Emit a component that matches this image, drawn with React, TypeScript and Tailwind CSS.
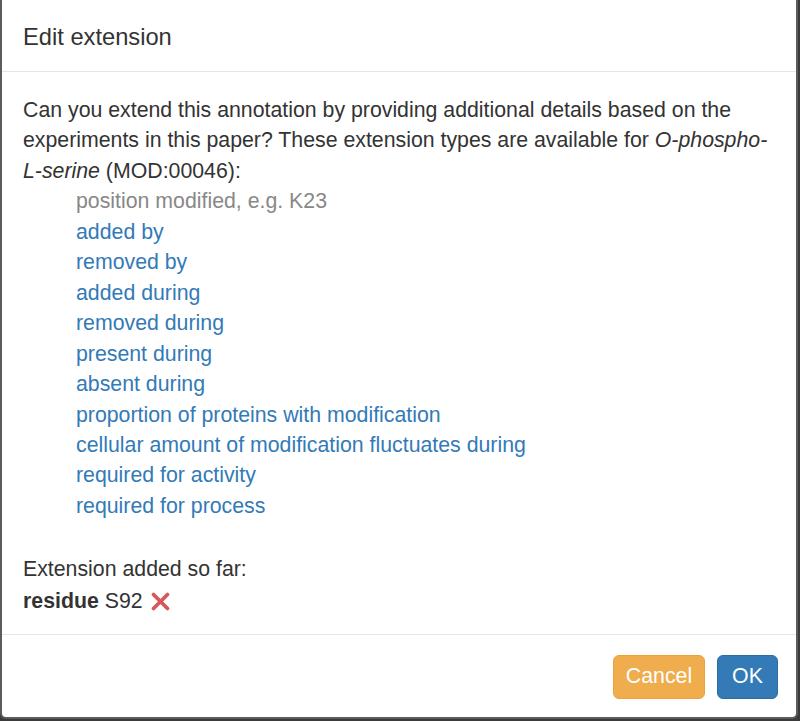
import React from "react";

const items = [
  "added by",
  "removed by",
  "added during",
  "removed during",
  "present during",
  "absent during",
  "proportion of proteins with modification",
  "cellular amount of modification fluctuates during",
  "required for activity",
  "required for process",
];

export default function App() {
  return (
    <div
      className="w-[800px] h-[721px] bg-[#3b3b3b] overflow-hidden"
      style={{ fontFamily: '"Liberation Sans", Arial, Helvetica, sans-serif' }}
    >
      <div className="w-[798px] bg-white border-l-2 border-r-2 border-b-2 border-[#5c5c5c] rounded-b-[6px] text-[#333333]">
        <div className="h-[72px] border-b border-[#e5e5e5] px-[21px] pt-[24px]">
          <h4 className="text-[23.7px] leading-[26px] m-0 font-normal">Edit extension</h4>
        </div>
        <div className="px-[21px] pt-[23px] pb-[17px] text-[21.3px] leading-[30.46px]">
          <div>
            Can you extend this annotation by providing additional details based on the
            <br />
            experiments in this paper? These extension types are available for{" "}
            <i>O-phospho-</i>
            <br />
            <i>L-serine</i> (MOD:00046):
          </div>
          <div className="pl-[53px]">
            <div className="text-[#888888]">position modified, e.g. K23</div>
            {items.map((t) => (
              <div key={t} className="text-[#337ab7]">
                {t}
              </div>
            ))}
          </div>
          <div className="mt-[33px]">Extension added so far:</div>
          <div className="flex items-center h-[32px]">
            <b className="font-bold">residue</b>
            <span className="ml-[6px]">S92</span>
            <svg className="ml-[7px] mt-[2px]" width="21" height="21" viewBox="0 0 21 21">
              <path
                d="M3.5 3.5 L17.5 17.5 M17.5 3.5 L3.5 17.5"
                stroke="#d5585a"
                strokeWidth="3.8"
                strokeLinecap="round"
              />
            </svg>
          </div>
        </div>
        <div className="border-t border-[#e5e5e5] flex justify-end gap-[12px] pt-[20px] pb-[18px] pr-[18px]">
          <button className="h-[44px] w-[92px] rounded-[6px] bg-[#f0ad4e] border border-[#eea236] text-white text-[21.3px]">
            Cancel
          </button>
          <button className="h-[44px] w-[61px] rounded-[6px] bg-[#337ab7] border border-[#2e6da4] text-white text-[21.3px]">
            OK
          </button>
        </div>
      </div>
    </div>
  );
}
